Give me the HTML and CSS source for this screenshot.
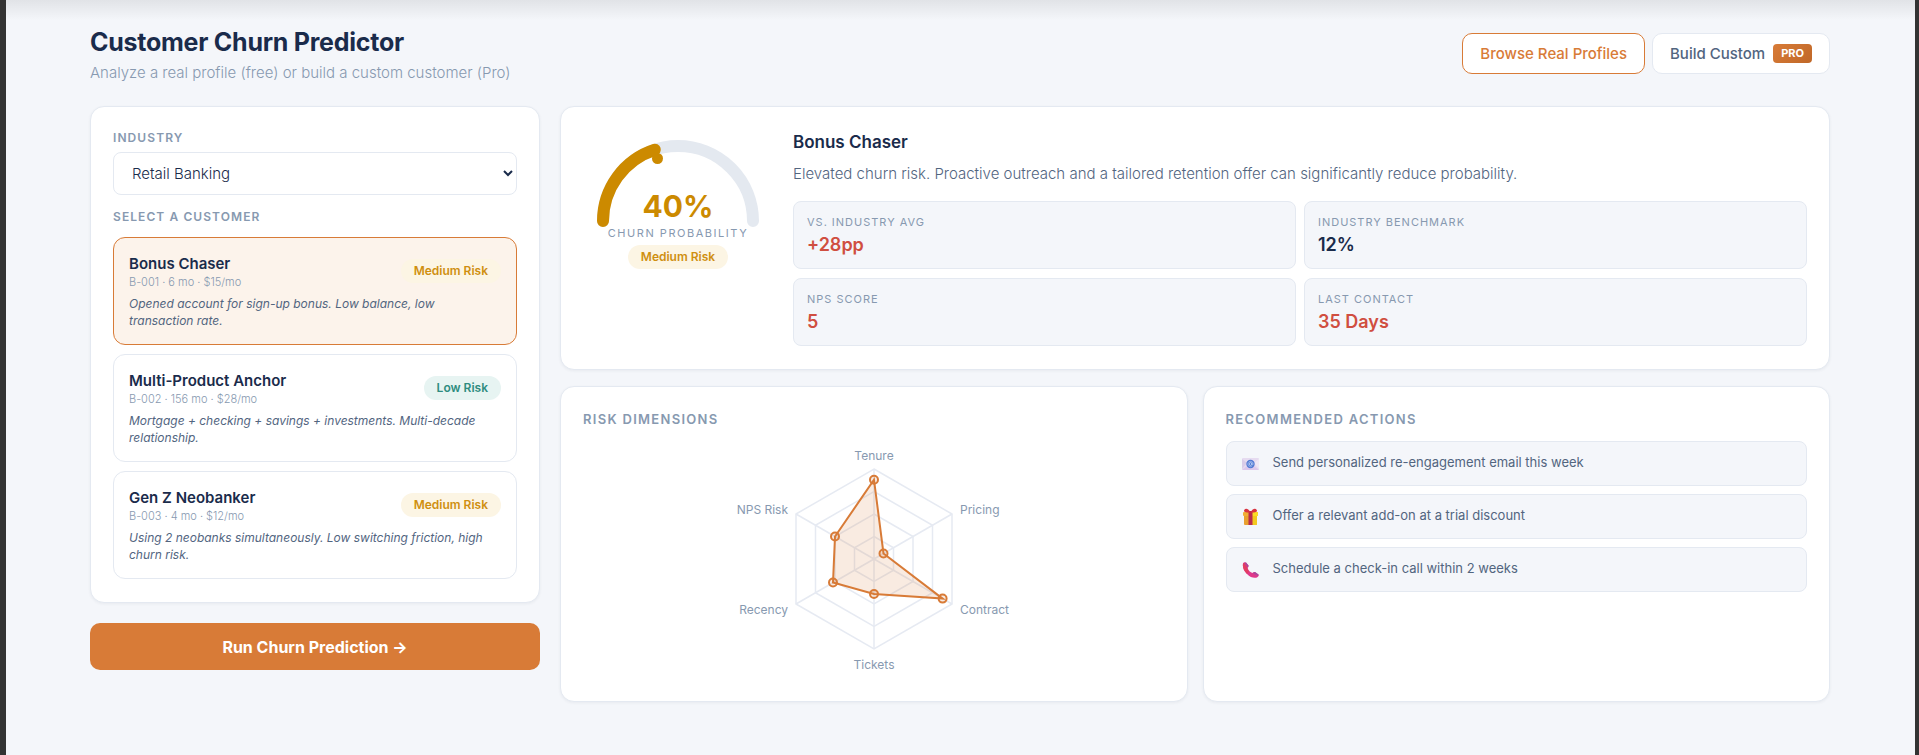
FILE: index.html
```html
<!DOCTYPE html>
<html lang="en">
<head>
    <meta charset="UTF-8">
    <meta name="viewport" content="width=device-width, initial-scale=1.0">
    <title>Customer Churn Predictor</title>
    <link rel="stylesheet" href="styles.css">
</head>
<body>
    <main class="page">
        <header class="page-header">
            <div>
                <h1 class="page-title">Customer Churn Predictor</h1>
                <p class="page-subtitle">Analyze a real profile (free) or build a custom customer (Pro)</p>
            </div>
            <div class="modes">
                <button class="mode-btn active" type="button">Browse Real Profiles</button>
                <button class="mode-btn" type="button">Build Custom <span class="pro-tag">PRO</span></button>
            </div>
        </header>

        <div class="layout">
            <aside class="sidebar">
                <section class="card">
                    <label class="field-label" for="industry">Industry</label>
                    <select class="select" id="industry">
                        <option>Retail Banking</option>
                    </select>

                    <h2 class="field-label">Select a customer</h2>
                    <div class="profiles">
                        <button class="profile selected" type="button">
                            <span class="profile-top">
                                <span>
                                    <span class="profile-name">Bonus Chaser</span>
                                    <span class="profile-meta">B-001 · 6 mo · $15/mo</span>
                                </span>
                                <span class="badge medium">Medium Risk</span>
                            </span>
                            <span class="profile-desc">Opened account for sign-up bonus. Low balance, low transaction rate.</span>
                        </button>
                        <button class="profile" type="button">
                            <span class="profile-top">
                                <span>
                                    <span class="profile-name">Multi-Product Anchor</span>
                                    <span class="profile-meta">B-002 · 156 mo · $28/mo</span>
                                </span>
                                <span class="badge low">Low Risk</span>
                            </span>
                            <span class="profile-desc">Mortgage + checking + savings + investments. Multi-decade relationship.</span>
                        </button>
                        <button class="profile" type="button">
                            <span class="profile-top">
                                <span>
                                    <span class="profile-name">Gen Z Neobanker</span>
                                    <span class="profile-meta">B-003 · 4 mo · $12/mo</span>
                                </span>
                                <span class="badge medium">Medium Risk</span>
                            </span>
                            <span class="profile-desc">Using 2 neobanks simultaneously. Low switching friction, high churn risk.</span>
                        </button>
                    </div>
                </section>
                <button class="run-btn" type="button">Run Churn Prediction →</button>
            </aside>

            <div class="results">
                <section class="card summary">
                    <div class="gauge">
                        <svg class="gauge-svg" width="188" height="106" viewBox="0 0 188 106">
                            <path d="M19 91 A75 75 0 0 1 169 91" fill="none" stroke="#e4e9f0" stroke-width="12" stroke-linecap="round"/>
                            <path d="M19 91 A75 75 0 0 1 70.8 19.7" fill="none" stroke="#cc8a00" stroke-width="12" stroke-linecap="round"/>
                            <circle cx="73.5" cy="28.5" r="5.5" fill="#cc8a00"/>
                            <text class="gauge-value" x="94" y="87" text-anchor="middle">40%</text>
                        </svg>
                        <div class="gauge-label">Churn probability</div>
                        <span class="badge medium">Medium Risk</span>
                    </div>
                    <div class="summary-body">
                        <h2 class="summary-title">Bonus Chaser</h2>
                        <p class="summary-text">Elevated churn risk. Proactive outreach and a tailored retention offer can significantly reduce probability.</p>
                        <div class="stats">
                            <div class="stat">
                                <div class="stat-label">vs. Industry avg</div>
                                <div class="stat-value bad">+28pp</div>
                            </div>
                            <div class="stat">
                                <div class="stat-label">Industry benchmark</div>
                                <div class="stat-value">12%</div>
                            </div>
                            <div class="stat">
                                <div class="stat-label">NPS score</div>
                                <div class="stat-value bad">5</div>
                            </div>
                            <div class="stat">
                                <div class="stat-label">Last contact</div>
                                <div class="stat-value bad">35 Days</div>
                            </div>
                        </div>
                    </div>
                </section>

                <div class="panels">
                    <section class="card">
                        <h2 class="panel-title">Risk dimensions</h2>
                        <svg class="radar" width="300" height="237" viewBox="-150 -118 300 237">
                            <!-- grid rings and spokes -->
                            <g class="radar-grid">
                                <polygon points="0,-90 78,-45 78,45 0,90 -78,45 -78,-45"/>
                                <polygon points="0,-67.5 58.5,-33.75 58.5,33.75 0,67.5 -58.5,33.75 -58.5,-33.75"/>
                                <polygon points="0,-45 39,-22.5 39,22.5 0,45 -39,22.5 -39,-22.5"/>
                                <polygon points="0,-22.5 19.5,-11.25 19.5,11.25 0,22.5 -19.5,11.25 -19.5,-11.25"/>
                                <path d="M0 -90V90M78 -45L-78 45M78 45L-78 -45"/>
                            </g>
                            <!-- customer values -->
                            <g class="radar-data">
                                <polygon points="0,-79.2 9.5,-5.5 68.6,39.6 0,35 -41,23.5 -39,-22.5"/>
                                <circle cx="0" cy="-79.2" r="4"/>
                                <circle cx="9.5" cy="-5.5" r="4"/>
                                <circle cx="68.6" cy="39.6" r="4"/>
                                <circle cx="0" cy="35" r="4"/>
                                <circle cx="-41" cy="23.5" r="4"/>
                                <circle cx="-39" cy="-22.5" r="4"/>
                            </g>
                            <g class="radar-labels">
                                <text x="0" y="-99" text-anchor="middle">Tenure</text>
                                <text x="86" y="-45">Pricing</text>
                                <text x="86" y="55">Contract</text>
                                <text x="0" y="110" text-anchor="middle">Tickets</text>
                                <text x="-86" y="55" text-anchor="end">Recency</text>
                                <text x="-86" y="-45" text-anchor="end">NPS Risk</text>
                            </g>
                        </svg>
                    </section>

                    <section class="card">
                        <h2 class="panel-title">Recommended actions</h2>
                        <ul class="actions">
                            <li class="action">
                                <svg class="action-icon" width="17" height="18" viewBox="0 0 17 18">
                                    <rect y="3" width="17" height="12" rx="1" fill="#e6dbf0"/>
                                    <path d="M0 4L5 8L0 14Z" fill="#d9cce8"/>
                                    <path d="M0 15L6 10H11L17 15Z" fill="#dcc8ec"/>
                                    <path d="M17 4L12 8L17 14Z" fill="#efe7f5"/>
                                    <circle cx="8.5" cy="9" r="4.2" fill="#4f78d2"/>
                                    <circle cx="8.5" cy="9" r="1.4" fill="none" stroke="#b9cdf5"/>
                                    <path d="M9.9 7.6V9.4Q10.8 11 11.2 9A2.7 2.7 0 1 0 9.8 11.4" fill="none" stroke="#b9cdf5" stroke-width="0.6"/>
                                </svg>
                                <span>Send personalized re-engagement email this week</span>
                            </li>
                            <li class="action">
                                <svg class="action-icon" width="17" height="18" viewBox="0 0 17 18">
                                    <rect x="2" y="7" width="13" height="10" rx="1" fill="#e9a02f"/>
                                    <rect x="10" y="7" width="5" height="10" rx="1" fill="#f3c91f"/>
                                    <rect x="1" y="4" width="15" height="4" rx="1" fill="#f0ad35"/>
                                    <rect x="10" y="4" width="6" height="4" rx="1" fill="#fbdc26"/>
                                    <rect x="6.5" y="3" width="4" height="14" fill="#b92b4c"/>
                                    <path d="M8.5 4.5C6 0 3 0 2 2.5C2 4.5 5 4.5 8.5 4.5C12 4.5 15 4.5 15 2.5C14 0 11 0 8.5 4.5Z" fill="#d8323f"/>
                                </svg>
                                <span>Offer a relevant add-on at a trial discount</span>
                            </li>
                            <li class="action">
                                <svg class="action-icon" width="17" height="18" viewBox="0 0 17 18">
                                    <path d="M1 2.5Q2 0.5 4 1.5L6.5 4.5Q7 5.5 5.5 7Q7 11 10.5 12Q12 10.5 13 11L16.5 13.5Q17.5 15 15 16.5Q10 18 5 13Q0 8 1 2.5Z" fill="#e0388a"/>
                                    <path d="M1 2.5Q0 8 5 13L7 10.5Q5.5 9 5.5 7L2.5 2Z" fill="#e23d62"/>
                                    <path d="M4 1.5L6.5 4.5L5.8 6.5L2.5 2ZM13 11L16.5 13.5L16 15L10.5 12Z" fill="#a84a9c"/>
                                </svg>
                                <span>Schedule a check-in call within 2 weeks</span>
                            </li>
                        </ul>
                    </section>
                </div>
            </div>
        </div>
    </main>
</body>
</html>
```
FILE: styles.css
```css
* {
    box-sizing: border-box;
}
:root {
    --navy: #1a2b4b;
    --slate: #52657f;
    --muted: #8799b0;
    --line: #e4e9f1;
    --bg: #f4f6fa;
    --orange: #d87b37;
    --amber: #cc8a00;
    --red: #d04e40;
}
body {
    margin: 0;
    min-height: 100vh;
    border-left: 6px solid #333;
    border-right: 4px solid #333;
    font-family: Inter, "Open Sans", sans-serif;
    font-size: 14px;
    color: var(--navy);
    background: linear-gradient(#e1e3e7, var(--bg) 20px) var(--bg);
}
h1, h2, p, ul {
    margin: 0;
    padding: 0;
}
button, select {
    font-family: inherit;
    cursor: pointer;
}
.page {
    padding: 24px 85px 48px 84px;
}

/* header */
.page-header {
    display: flex;
    justify-content: space-between;
    align-items: center;
    margin-bottom: 23px;
}
.page-title {
    font-size: 25px;
    line-height: 36px;
    font-weight: 700;
    letter-spacing: -0.01em;
}
.page-subtitle {
    margin-top: 3px;
    font-size: 15px;
    line-height: 20px;
    font-weight: 300;
    color: var(--muted);
}
.modes {
    display: flex;
    gap: 7px;
}
.mode-btn {
    display: flex;
    align-items: center;
    gap: 8px;
    height: 41px;
    padding: 0 17px;
    border: 1px solid var(--line);
    border-radius: 10px;
    background: #fff;
    color: var(--slate);
    font-size: 15px;
    font-weight: 500;
}
.mode-btn.active {
    border-color: var(--orange);
    color: var(--orange);
}
.pro-tag {
    padding: 0 8px;
    border-radius: 4px;
    background: linear-gradient(135deg, #d87b37, #c06828);
    color: #fff;
    font-size: 11px;
    line-height: 19px;
    font-weight: 700;
}

/* layout */
.layout {
    display: grid;
    grid-template-columns: 450px 1fr;
    gap: 20px;
}
.sidebar {
    display: flex;
    flex-direction: column;
    gap: 20px;
}
.card {
    padding: 23px 22px;
    border: 1px solid var(--line);
    border-radius: 14px;
    background: #fff;
    box-shadow: 0 1px 3px rgba(26, 43, 75, 0.06);
}

/* customer picker */
.field-label {
    display: block;
    margin-bottom: 6px;
    font-size: 12px;
    line-height: 16px;
    font-weight: 600;
    letter-spacing: 0.09em;
    text-transform: uppercase;
    color: var(--muted);
}
.select {
    width: 100%;
    height: 43px;
    margin-bottom: 14px;
    padding: 0 14px;
    border: 1px solid var(--line);
    border-radius: 8px;
    background: #fff;
    color: var(--navy);
    font-size: 15px;
    font-weight: 300;
}
.profiles {
    display: flex;
    flex-direction: column;
    gap: 9px;
    margin-top: 12px;
}
.profile {
    display: block;
    width: 100%;
    padding: 15px;
    border: 1px solid var(--line);
    border-radius: 12px;
    background: #fff;
    text-align: left;
    color: var(--navy);
}
.profile.selected {
    border-color: var(--orange);
    background: #fcf3eb;
}
.profile-top {
    display: flex;
    justify-content: space-between;
    align-items: center;
    margin-bottom: 6px;
}
.profile-name,
.profile-meta,
.profile-desc {
    display: block;
}
.profile-name {
    font-size: 15px;
    line-height: 22px;
    font-weight: 600;
}
.profile-meta {
    font-size: 11px;
    line-height: 14px;
    font-weight: 300;
    color: var(--muted);
}
.profile-desc {
    font-size: 12px;
    line-height: 17px;
    font-style: italic;
    color: var(--slate);
}
.badge {
    display: inline-block;
    padding: 0 13px;
    border-radius: 12px;
    font-size: 12px;
    line-height: 24px;
    font-weight: 600;
    white-space: nowrap;
}
.badge.medium {
    background: #fcf5e4;
    color: #cf8f10;
}
.badge.low {
    background: #e7f4f2;
    color: #2f8c80;
}
.run-btn {
    height: 47px;
    border: 0;
    border-radius: 10px;
    background: var(--orange);
    color: #fff;
    font-size: 16px;
    font-weight: 700;
}

/* result summary */
.results {
    display: flex;
    flex-direction: column;
    gap: 16px;
}
.summary {
    display: flex;
    gap: 20px;
}
.gauge {
    flex: 0 0 190px;
    display: flex;
    flex-direction: column;
    align-items: center;
}
.gauge-svg {
    margin-bottom: -11px;
}
.gauge-value {
    font-size: 30px;
    font-weight: 700;
    fill: var(--amber);
}
.gauge-label {
    margin-bottom: 4px;
    font-size: 11px;
    line-height: 16px;
    letter-spacing: 0.14em;
    text-transform: uppercase;
    color: var(--muted);
}
.summary-body {
    flex: 1;
}
.summary-title {
    font-size: 17px;
    line-height: 24px;
    font-weight: 600;
}
.summary-text {
    margin: 8px 0 15px;
    font-size: 15px;
    line-height: 24px;
    font-weight: 300;
    color: var(--slate);
}
.stats {
    display: grid;
    grid-template-columns: 1fr 1fr;
    gap: 9px 8px;
}
.stat {
    padding: 12px 13px 10px;
    border: 1px solid var(--line);
    border-radius: 8px;
    background: var(--bg);
}
.stat-label {
    font-size: 11px;
    line-height: 16px;
    letter-spacing: 0.09em;
    text-transform: uppercase;
    color: var(--muted);
}
.stat-value {
    margin-top: 2px;
    font-size: 18px;
    line-height: 26px;
    font-weight: 600;
}
.stat-value.bad {
    color: var(--red);
}

/* panels */
.panels {
    display: grid;
    grid-template-columns: 1fr 1fr;
    gap: 15px;
}
.panel-title {
    margin-bottom: 13px;
    font-size: 13px;
    line-height: 18px;
    font-weight: 600;
    letter-spacing: 0.1em;
    text-transform: uppercase;
    color: var(--muted);
}
.radar {
    display: block;
    margin: 0 auto;
}
.radar-grid {
    fill: none;
    stroke: #e6eaf2;
    stroke-width: 1.5;
}
.radar-data {
    fill: rgba(216, 123, 55, 0.15);
    stroke: var(--orange);
    stroke-width: 2;
}
.radar-labels {
    font-size: 12px;
    fill: var(--muted);
}
.actions {
    display: flex;
    flex-direction: column;
    gap: 8px;
    list-style: none;
}
.action {
    display: flex;
    gap: 14px;
    padding: 9px 15px 12px;
    border: 1px solid var(--line);
    border-radius: 8px;
    background: var(--bg);
    font-size: 13px;
    line-height: 22px;
    color: var(--slate);
}
.action-icon {
    margin-top: 4px;
}
```
